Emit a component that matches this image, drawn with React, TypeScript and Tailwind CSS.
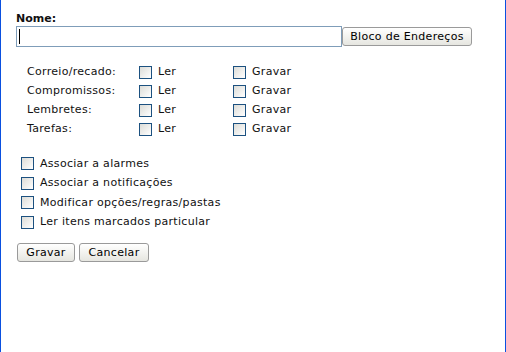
import React from 'react';

const font = { fontFamily: '"DejaVu Sans", Verdana, sans-serif' };

// XP style checkbox
const Box = () => (
    <span className="inline-block w-[13px] h-[13px] shrink-0 border border-[#1c5180] bg-gradient-to-br from-[#dcdcd7] to-white" />
);

const XpButton: React.FC<{ label: string; className?: string }> = ({ label, className = '' }) => (
    <button
        className={`h-[19px] rounded-[3px] border border-[#9a9a9a] bg-gradient-to-b from-white to-[#e6e6e0] text-[11px] leading-none text-black tracking-[0.3px] ${className}`}
    >
        {label}
    </button>
);

const permissions = ['Correio/recado:', 'Compromissos:', 'Lembretes:', 'Tarefas:'];
const options = [
    'Associar a alarmes',
    'Associar a notificações',
    'Modificar opções/regras/pastas',
    'Ler itens marcados particular',
];

export default function App() {
    return (
        <div
            className="w-[506px] h-[352px] bg-white border-x border-[#0a50e0] text-[11px] text-[#111] tracking-[0.3px]"
            style={font}
        >
            <div className="pl-[15px] pt-[12px]">
                {/* Name */}
                <div className="font-bold text-[11px] leading-[14px] h-[14px] tracking-normal">Nome:</div>
                <div className="flex items-center h-[21px]">
                    <div className="w-[326px] h-[21px] border border-[#7f9db9] flex items-center pl-[2px]">
                        <span className="w-px h-[15px] bg-black" />
                    </div>
                    <XpButton label="Bloco de Endereços" className="w-[130px]" />
                </div>

                {/* Permission table */}
                <div className="mt-[16px] pl-[11px]">
                    {permissions.map((p) => (
                        <div key={p} className="flex items-center h-[19px]">
                            <span className="w-[112px]">{p}</span>
                            <div className="w-[94px] flex items-center gap-[6px]">
                                <Box />
                                <span>Ler</span>
                            </div>
                            <div className="flex items-center gap-[6px]">
                                <Box />
                                <span>Gravar</span>
                            </div>
                        </div>
                    ))}
                </div>

                {/* Options */}
                <div className="mt-[15px] pl-[5px]">
                    {options.map((o) => (
                        <div key={o} className="flex items-center h-[19.5px] gap-[6px]">
                            <Box />
                            <span>{o}</span>
                        </div>
                    ))}
                </div>

                {/* Actions */}
                <div className="mt-[11px] flex gap-[4px] pl-px">
                    <XpButton label="Gravar" className="w-[58px]" />
                    <XpButton label="Cancelar" className="w-[70px]" />
                </div>
            </div>
        </div>
    );
}
